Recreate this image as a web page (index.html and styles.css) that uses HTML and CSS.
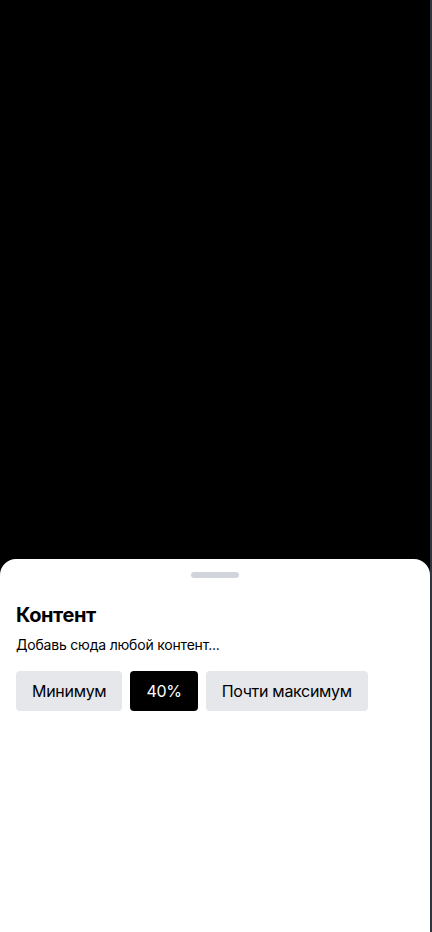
FILE: index.html
```html
<!DOCTYPE html>
<html lang="ru">
<head>
<meta charset="utf-8">
<title>Sheet</title>
<link rel="stylesheet" href="styles.css">
</head>
<body>
<div class="screen">
  <main class="stage">
    <div class="backdrop"></div>
    <section class="sheet">
      <div class="handle"></div>
      <h2 class="title">Контент</h2>
      <p class="desc">Добавь сюда любой контент...</p>
      <div class="options">
        <button class="opt">Минимум</button>
        <button class="opt active">40%</button>
        <button class="opt">Почти максимум</button>
      </div>
    </section>
  </main>
  <div class="rail"></div>
</div>
</body>
</html>
```
FILE: styles.css
```css
* { box-sizing: border-box; }
html, body { margin: 0; padding: 0; height: 100%; }
body {
  font-family: Inter, "Noto Sans", sans-serif;
  background: #000;
  color: #000;
}
.screen {
  display: flex;
  height: 932px;
}
.stage {
  flex: 1;
  display: flex;
  flex-direction: column;
  background: #000;
}
.backdrop { flex: 1; }
.rail {
  width: 2px;
  background: #2f3542;
}
.sheet {
  height: 373px;
  background: #fff;
  border-radius: 16px 16px 0 0;
  padding: 13px 16px 16px;
  display: flex;
  flex-direction: column;
}
.handle {
  width: 48px;
  height: 6px;
  border-radius: 3px;
  background: #d1d5db;
  align-self: center;
}
.title {
  margin: 23px 0 0;
  font-size: 20px;
  line-height: 28px;
  font-weight: 700;
  letter-spacing: -0.4px;
}
.desc {
  margin: 6px 0 0;
  font-size: 14px;
  line-height: 20px;
  letter-spacing: -0.2px;
}
.options {
  display: flex;
  gap: 8px;
  margin-top: 16px;
}
.opt {
  font-family: inherit;
  font-size: 16px;
  line-height: 24px;
  height: 40px;
  padding: 8px 16px;
  border: 0;
  border-radius: 4px;
  background: #e5e7eb;
  color: #000;
  letter-spacing: -0.3px;
}
.opt.active {
  background: #000;
  color: #fff;
}
```
